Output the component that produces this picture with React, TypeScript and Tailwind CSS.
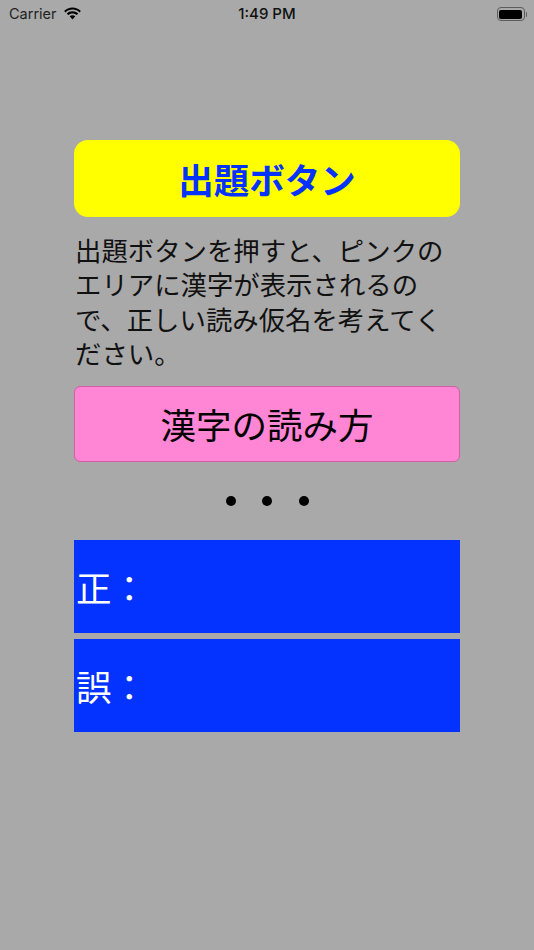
import React from 'react';

const jp = 'font-["Noto_Sans_CJK_JP",sans-serif]';

function WifiIcon() {
  return (
    <svg width="19" height="14" viewBox="0 0 19 14" className="ml-[6px]">
      <path d="M9.5 2.6c2.7 0 5.1 1 7 2.8l1.4-1.5C15.6 1.7 12.7.4 9.5.4S3.4 1.7 1.1 3.9l1.4 1.5c1.9-1.8 4.3-2.8 7-2.8z" fill="#000" />
      <path d="M9.5 6.4c1.6 0 3.1.6 4.3 1.7l1.4-1.5C13.7 5.1 11.7 4.3 9.5 4.3s-4.2.8-5.7 2.3l1.4 1.5c1.2-1.1 2.7-1.7 4.3-1.7z" fill="#000" />
      <path d="M9.5 8.2c-1.1 0-2 .4-2.8 1.1l2.8 3.1 2.8-3.1c-.8-.7-1.7-1.1-2.8-1.1z" fill="#000" />
    </svg>
  );
}

function BatteryIcon() {
  return (
    <div className="flex items-center">
      <div className="w-[28px] h-[14px] rounded-[4px] border border-[#5c5c5c] p-[1.5px]">
        <div className="w-full h-full rounded-[2px] bg-black" />
      </div>
      <div className="w-[1.5px] h-[5px] ml-[1px] rounded-r-sm bg-[#5c5c5c]" />
    </div>
  );
}

function StatusBar() {
  return (
    <div className="relative flex items-center justify-between h-[28px] pl-[9px] pr-[7px] text-[15px] text-[#111] font-['Inter',sans-serif]">
      <div className="flex items-center">
        <span className="text-[14.5px] text-[#222]">Carrier</span>
        <WifiIcon />
      </div>
      <span className="absolute left-0 right-0 text-center font-medium">1:49 PM</span>
      <BatteryIcon />
    </div>
  );
}

export default function App() {
  return (
    <div className={`w-[534px] h-[950px] bg-[#a9a9a9] overflow-hidden ${jp}`}>
      <StatusBar />
      <div className="flex flex-col mx-[74px] w-[386px] pt-[112px]">
        <button className="h-[77px] rounded-[14px] bg-[#ffff00] text-[35.5px] font-bold leading-none text-[#0433ff]">
          出題ボタン
        </button>

        <p className="mt-[16px] pl-[1px] text-[26.4px] leading-[34.3px] text-[#111] whitespace-nowrap">
          <span className="block">出題ボタンを押すと、ピンクの</span>
          <span className="block">エリアに漢字が表示されるの</span>
          <span className="block">で、正しい読み仮名を考えてく</span>
          <span className="block">ださい。</span>
        </p>

        <div className="mt-[16px] h-[76px] flex items-center justify-center rounded-[6px] border border-[#d35fa6] bg-[#ff85d5] text-[35.5px] leading-none text-black">
          漢字の読み方
        </div>

        <div className="mt-[34px] flex items-center justify-center gap-[26.5px]">
          <span className="w-[10px] h-[10px] rounded-full bg-black" />
          <span className="w-[10px] h-[10px] rounded-full bg-black" />
          <span className="w-[10px] h-[10px] rounded-full bg-black" />
        </div>

        <div className="mt-[34px] h-[93px] flex items-center pl-[2px] bg-[#0433ff] text-[35.5px] leading-none text-white">
          正：
        </div>
        <div className="mt-[6px] h-[93px] flex items-center pl-[2px] bg-[#0433ff] text-[35.5px] leading-none text-white">
          誤：
        </div>
      </div>
    </div>
  );
}
